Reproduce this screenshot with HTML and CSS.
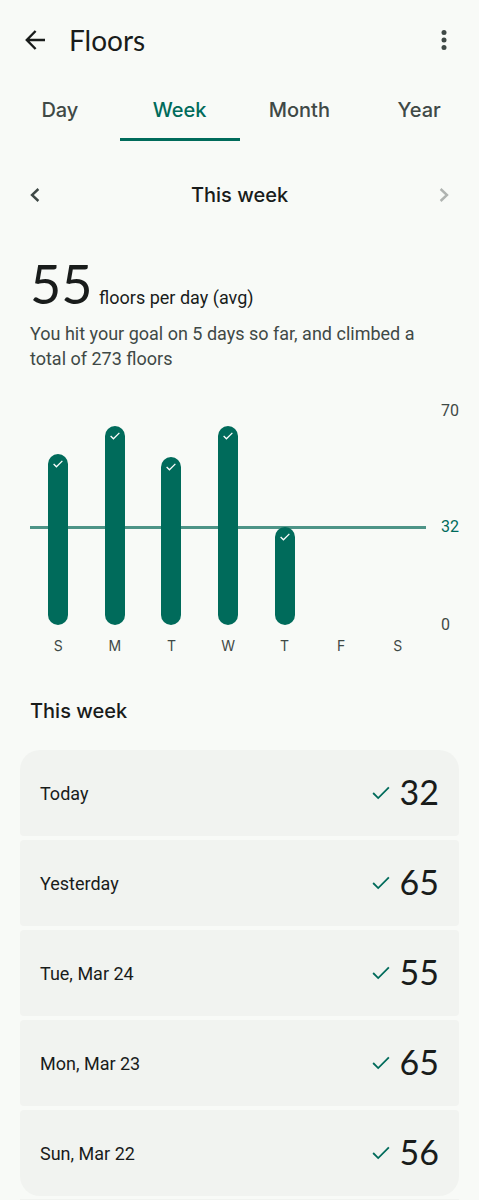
FILE: index.html
```html
<!DOCTYPE html>
<html lang="en">
<head>
    <meta charset="UTF-8">
    <meta name="viewport" content="width=device-width, initial-scale=1.0">
    <title>Floors</title>
    <link rel="stylesheet" href="styles.css">
</head>
<body>
    <!-- Shared check mark -->
    <svg class="defs" aria-hidden="true">
        <symbol id="check" viewBox="0 0 16 12">
            <path d="M1 6 L5.5 10.5 L15 1" fill="none" stroke="currentColor"/>
        </symbol>
    </svg>

    <header class="top-bar">
        <button class="icon-btn" aria-label="Back">
            <svg width="20" height="20" viewBox="0 0 20 20" fill="none" stroke="currentColor" stroke-width="2.4">
                <path d="M20 10H1.8M10.6 1L1.8 10L10.6 19"/>
            </svg>
        </button>
        <h1>Floors</h1>
        <button class="icon-btn more" aria-label="More options">
            <svg width="6" height="20" viewBox="0 0 6 20" fill="currentColor">
                <circle cx="3" cy="2.6" r="2.5"/>
                <circle cx="3" cy="10" r="2.5"/>
                <circle cx="3" cy="17.4" r="2.5"/>
            </svg>
        </button>
    </header>

    <nav class="tabs">
        <button>Day</button>
        <button class="active">Week</button>
        <button>Month</button>
        <button>Year</button>
    </nav>

    <main>
        <div class="period">
            <button class="icon-btn" aria-label="Previous week">
                <svg width="10" height="14" viewBox="0 0 10 14" fill="none" stroke="currentColor" stroke-width="2.4">
                    <path d="M8.4 1L2 7L8.4 13"/>
                </svg>
            </button>
            <span>This week</span>
            <button class="icon-btn" aria-label="Next week" disabled>
                <svg width="10" height="14" viewBox="0 0 10 14" fill="none" stroke="currentColor" stroke-width="2.4">
                    <path d="M1.6 1L8 7L1.6 13"/>
                </svg>
            </button>
        </div>

        <section class="summary">
            <p class="average"><strong>55</strong> floors per day (avg)</p>
            <p class="note">You hit your goal on 5 days so far, and climbed a total of 273 floors</p>
        </section>

        <section class="chart">
            <div class="plot">
                <div class="goal-line"></div>
                <div class="column"><div class="bar" style="height: 80%"><svg><use href="#check"/></svg></div></div>
                <div class="column"><div class="bar" style="height: 92.9%"><svg><use href="#check"/></svg></div></div>
                <div class="column"><div class="bar" style="height: 78.6%"><svg><use href="#check"/></svg></div></div>
                <div class="column"><div class="bar" style="height: 92.9%"><svg><use href="#check"/></svg></div></div>
                <div class="column"><div class="bar" style="height: 45.7%"><svg><use href="#check"/></svg></div></div>
                <div class="column"></div>
                <div class="column"></div>
            </div>
            <div class="axis">
                <span>70</span>
                <span class="goal">32</span>
                <span>0</span>
            </div>
            <div class="days">
                <span>S</span>
                <span>M</span>
                <span>T</span>
                <span>W</span>
                <span>T</span>
                <span>F</span>
                <span>S</span>
            </div>
        </section>

        <h2>This week</h2>
        <ul class="day-list">
            <li><span>Today</span><svg><use href="#check"/></svg><b>32</b></li>
            <li><span>Yesterday</span><svg><use href="#check"/></svg><b>65</b></li>
            <li><span>Tue, Mar 24</span><svg><use href="#check"/></svg><b>55</b></li>
            <li><span>Mon, Mar 23</span><svg><use href="#check"/></svg><b>65</b></li>
            <li><span>Sun, Mar 22</span><svg><use href="#check"/></svg><b>56</b></li>
        </ul>
        <div class="divider"></div>
    </main>
</body>
</html>
```
FILE: styles.css
```css
* {
    box-sizing: border-box;
}

body {
    margin: 0;
    background: #f8faf7;
    color: #191c1b;
    font-family: Roboto, sans-serif;
}

h1, h2, p, ul {
    margin: 0;
    padding: 0;
}

svg {
    display: block;
}

button {
    padding: 0;
    border: none;
    background: none;
    color: inherit;
    font: inherit;
    cursor: pointer;
}

.defs {
    position: absolute;
    width: 0;
    height: 0;
}

.icon-btn {
    display: flex;
    align-items: center;
    justify-content: center;
    width: 40px;
    height: 40px;
}

/* Top bar */
.top-bar {
    display: flex;
    align-items: center;
    gap: 14px;
    height: 80px;
    padding: 0 15px;
}

.top-bar h1 {
    flex: 1;
    font-family: Lato, sans-serif;
    font-size: 28px;
    font-weight: 400;
    line-height: 36px;
}

.more {
    color: #3f4946;
}

/* Tabs */
.tabs {
    display: flex;
    height: 61px;
}

.tabs button {
    flex: 1;
    padding-top: 2px;
    border-bottom: 3px solid transparent;
    color: #3f4946;
    font-family: Inter, sans-serif;
    font-size: 20px;
    font-weight: 500;
}

.tabs .active {
    border-color: #006b5b;
    color: #006b5b;
}

/* Period picker */
.period {
    display: flex;
    align-items: center;
    justify-content: space-between;
    margin-top: 34px;
    padding: 0 15px;
    font-family: Inter, sans-serif;
    font-size: 20px;
    font-weight: 500;
}

.period .icon-btn {
    color: #3f4946;
}

.period .icon-btn:disabled {
    color: #b0b4b1;
}

/* Summary */
.summary {
    margin-top: 46px;
    padding: 0 30px;
}

.average {
    font-size: 18px;
    line-height: 46px;
}

.average strong {
    margin-right: 2px;
    font-family: Lato, sans-serif;
    font-size: 54px;
    font-weight: 400;
}

.note {
    color: #3f4946;
    font-size: 18px;
    line-height: 25px;
}

/* Chart */
.chart {
    display: grid;
    grid-template-columns: 1fr 38px;
    column-gap: 15px;
    margin-top: 40px;
    padding-left: 30px;
}

.plot {
    position: relative;
    display: flex;
    height: 214px;
}

.column {
    flex: 1;
    display: flex;
    align-items: flex-end;
    justify-content: center;
}

.bar {
    position: relative;
    width: 20px;
    padding: 6px 5px;
    border-radius: 10px;
    background: #006b5b;
    color: #fff;
}

.bar svg {
    width: 10px;
    height: 8px;
    stroke-width: 2;
}

.goal-line {
    position: absolute;
    left: 0;
    right: 0;
    bottom: 45%;
    height: 3px;
    background: #4d9487;
}

.axis {
    display: flex;
    flex-direction: column;
    margin: -10px 0;
    color: #3f4946;
    font-size: 16px;
    line-height: 20px;
}

.axis .goal {
    margin: auto 0;
    padding-top: 18px;
    color: #006b5b;
}

.days {
    display: flex;
    margin-top: 11px;
    color: #3f4946;
    font-family: Inter, sans-serif;
    font-size: 14px;
    line-height: 20px;
    text-align: center;
}

.days span {
    flex: 1;
}

/* Daily list */
h2 {
    margin-top: 41px;
    padding: 0 30px;
    font-family: Inter, sans-serif;
    font-size: 20px;
    font-weight: 500;
    line-height: 28px;
}

.day-list {
    display: flex;
    flex-direction: column;
    gap: 4px;
    margin: 25px 20px 3px;
    list-style: none;
}

.day-list li {
    display: flex;
    align-items: center;
    height: 86px;
    padding: 0 20px;
    border-radius: 4px;
    background: #f1f3f0;
    font-size: 18px;
}

.day-list li:first-child {
    border-top-left-radius: 20px;
    border-top-right-radius: 20px;
}

.day-list li:last-child {
    border-bottom-left-radius: 20px;
    border-bottom-right-radius: 20px;
}

.day-list span {
    flex: 1;
}

.day-list svg {
    width: 18px;
    height: 14px;
    margin-right: 10px;
    color: #006b5b;
    stroke-width: 1.6;
}

.day-list b {
    font-family: Lato, sans-serif;
    font-size: 34px;
    font-weight: 400;
    line-height: 40px;
    padding-bottom: 2px;
}

.divider {
    height: 2px;
    margin: 0 20px;
    background: #f1f3f0;
}
```
